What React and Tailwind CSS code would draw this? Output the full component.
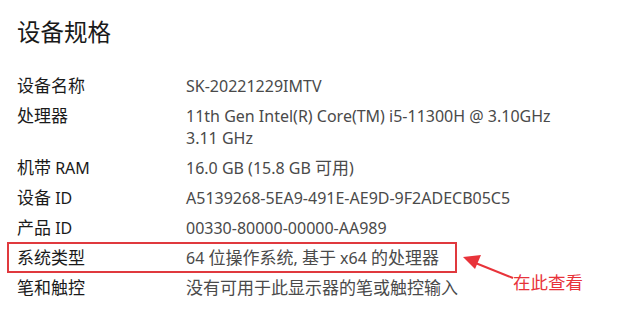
import React from "react";

const rows = [
  ["设备名称", "SK-20221229IMTV"],
  ["处理器", "11th Gen Intel(R) Core(TM) i5-11300H @ 3.10GHz\n3.11 GHz"],
  ["机带 RAM", "16.0 GB (15.8 GB 可用)"],
  ["设备 ID", "A5139268-5EA9-491E-AE9D-9F2ADECB05C5"],
  ["产品 ID", "00330-80000-00000-AA989"],
  ["系统类型", "64 位操作系统, 基于 x64 的处理器", true],
  ["笔和触控", "没有可用于此显示器的笔或触控输入"],
];

function Mixed({ text }) {
  const parts = text.split(/([\u4e00-\u9fff]+)/).filter(Boolean);
  return parts.map((p, i) =>
    /[\u4e00-\u9fff]/.test(p) ? (
      <span key={i} className="text-[17px]">{p}</span>
    ) : (
      <span key={i}>{p}</span>
    )
  );
}

export default function App() {
  return (
    <div
      className="relative w-[640px] h-[314px] overflow-hidden bg-white"
      style={{ fontFamily: "'Noto Sans', 'Noto Sans CJK SC', sans-serif" }}
    >
      <div className="pl-[17px] pt-[15px]">
        <h1 className="text-[23.5px] leading-[34px] text-[#1a1a1a] font-normal">设备规格</h1>
        <div className="mt-[26px] flex flex-col gap-[8px]">
          {rows.map(([k, v, hl]) => (
            <div key={k} className="relative grid grid-cols-[169px_1fr] text-[16px] leading-[22px]">
              {hl && (
                <div className="absolute -left-[10px] -top-[5px] w-[450px] h-[31px] border-2 border-[#e0393e]" />
              )}
              <div className="text-[#1a1a1a] whitespace-pre-line">
                <Mixed text={k} />
              </div>
              <div className="text-[#4a4a4a] whitespace-pre-line">
                <Mixed text={v} />
              </div>
            </div>
          ))}
        </div>
      </div>
      <svg className="absolute left-[455px] top-[245px]" width="70" height="40" viewBox="0 0 70 40">
        <line x1="58" y1="33" x2="18" y2="17" stroke="#e8333a" strokeWidth="2" />
        <polygon points="8,12 26,10 20,24" fill="#e8333a" />
      </svg>
      <div className="absolute left-[513px] top-[270px] text-[17.5px] leading-[24px] text-[#e8333a]">在此查看</div>
    </div>
  );
}
